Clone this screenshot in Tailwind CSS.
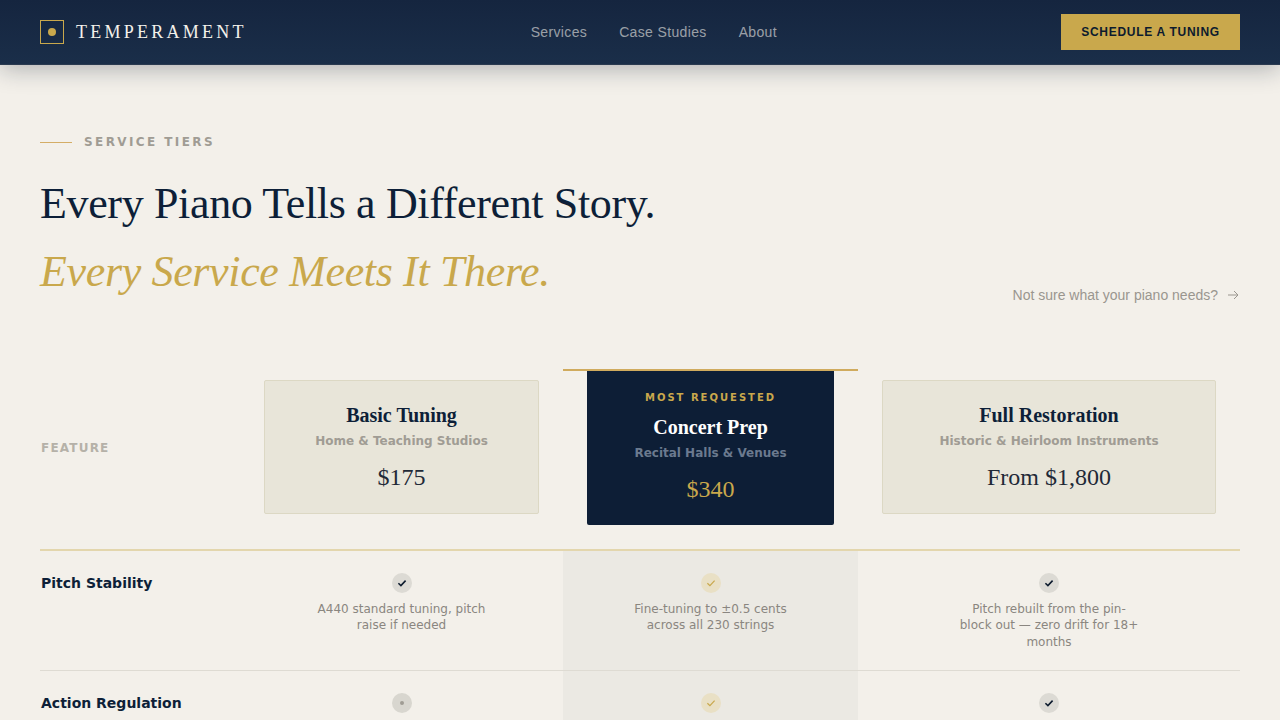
<!DOCTYPE html>
<html lang="en">
<head>
    <meta charset="UTF-8">
    <meta name="viewport" content="width=device-width, initial-scale=1.0">
    <title>Temperament</title>
    <script src="https://cdn.jsdelivr.net/npm/@tailwindcss/browser@4"></script>
</head>
<body class="bg-[#f3f0ea] h-[720px] overflow-hidden font-['DejaVu_Sans',sans-serif]">

    <!-- Nav -->
    <nav class="relative z-10 h-[65px] px-10 bg-linear-to-b from-[#15253f] to-[#1a2e49] border-b border-[#2a3a50] shadow-[0_4px_24px_rgba(13,27,46,0.3)] flex justify-between items-center">
        <div class="flex items-center gap-3">
            <div class="w-6 h-6 border border-[#c9a84c] flex items-center justify-center">
                <div class="w-2 h-2 rounded-full bg-[#c9a84c]"></div>
            </div>
            <span class="font-['Liberation_Serif',serif] text-lg leading-none tracking-[0.18em] text-[#f4f1eb]">TEMPERAMENT</span>
        </div>
        <div class="flex gap-8 font-['Liberation_Sans',sans-serif] text-sm tracking-[0.025em] text-[#f4f1eb]/60">
            <a>Services</a>
            <a>Case Studies</a>
            <a>About</a>
        </div>
        <button class="w-[179px] h-9 bg-[#c9a84c] font-['Liberation_Sans',sans-serif] text-xs font-bold tracking-[0.06em] text-[#0d1b2e]">SCHEDULE A TUNING</button>
    </nav>

    <main class="px-10">
        <!-- Heading -->
        <div class="pt-[69px] flex items-center gap-3">
            <div class="w-8 h-px bg-[#d4ad66]"></div>
            <span class="text-xs leading-4 font-bold tracking-[0.2em] text-[#a09c94]">SERVICE TIERS</span>
        </div>
        <div class="flex justify-between items-end">
            <h1 class="mt-5 font-['Liberation_Serif',serif] text-[44px] leading-[68px] font-normal tracking-[-0.35px] text-[#0d1f38]">
                Every Piano Tells a Different Story.<br>
                <em class="text-[#c9a84c]">Every Service Meets It There.</em>
            </h1>
            <a class="mb-px mr-px flex items-center gap-[9px] font-['Liberation_Sans',sans-serif] text-sm text-[#9a968f]">
                Not sure what your piano needs?
                <svg class="w-3 h-3" viewBox="0 0 12 12" fill="none" stroke="currentColor" stroke-width="1"><path d="M1 6h10M7 2l4 4-4 4"/></svg>
            </a>
        </div>

        <!-- Tiers table -->
        <div class="mt-[63px] grid grid-cols-[200px_323px_295px_382px]">
            <!-- Header row -->
            <div class="h-[182px] flex items-center border-b-2 border-[#e3d6ad] pb-[22px]">
                <span class="pl-px text-xs font-bold tracking-[0.1em] text-[#b5b1a8]">FEATURE</span>
            </div>
            <div class="h-[182px] pt-[11px] px-6 border-b-2 border-[#e3d6ad]">
                <div class="h-[134px] bg-[#e8e5d9] border border-[#dcd8c4] rounded-[2px] flex flex-col items-center">
                    <div class="mt-[21px] font-['Liberation_Serif',serif] text-xl leading-[26px] font-bold text-[#0d1f38]">Basic Tuning</div>
                    <div class="mt-[5px] text-xs leading-4 font-bold text-[#a09c94]">Home &amp; Teaching Studios</div>
                    <div class="mt-3 font-['Liberation_Serif',serif] text-2xl leading-8 text-[#1f2937]">$175</div>
                </div>
            </div>
            <div class="h-[182px] px-6 border-t-2 border-[#d0ab5e] border-b-2 border-b-[#e3d6ad]">
                <div class="h-[154px] bg-[#0d1e36] rounded-b-[2px] flex flex-col items-center">
                    <div class="mt-5 text-[10px] leading-[14px] font-bold tracking-[0.2em] text-[#c9a84c]">MOST REQUESTED</div>
                    <div class="mt-[9px] font-['Liberation_Serif',serif] text-xl leading-[26px] font-bold text-white">Concert Prep</div>
                    <div class="mt-[5px] text-xs leading-4 font-bold text-[#6b7a8f]">Recital Halls &amp; Venues</div>
                    <div class="mt-3 font-['Liberation_Serif',serif] text-2xl leading-8 text-[#c9a84c]">$340</div>
                </div>
            </div>
            <div class="h-[182px] pt-[11px] px-6 border-b-2 border-[#e3d6ad]">
                <div class="h-[134px] bg-[#e8e5d9] border border-[#dcd8c4] rounded-[2px] flex flex-col items-center">
                    <div class="mt-[21px] font-['Liberation_Serif',serif] text-xl leading-[26px] font-bold text-[#0d1f38]">Full Restoration</div>
                    <div class="mt-[5px] text-xs leading-4 font-bold text-[#a09c94]">Historic &amp; Heirloom Instruments</div>
                    <div class="mt-3 font-['Liberation_Serif',serif] text-2xl leading-8 text-[#1f2937]">From $1,800</div>
                </div>
            </div>

            <!-- Pitch Stability -->
            <div class="h-[120px] pt-6 border-b border-[#dedbd3]">
                <span class="pl-px block text-sm leading-4 font-bold text-[#0d1f38]">Pitch Stability</span>
            </div>
            <div class="h-[120px] pt-[22px] flex flex-col items-center border-b border-[#dedbd3]">
                <div class="w-5 h-5 rounded-full bg-[#dcdad4] flex items-center justify-center">
                    <svg class="w-3 h-3 text-[#0d1b2e]" viewBox="0 0 10 10" fill="none" stroke="currentColor" stroke-width="1.3"><path d="M2 5.2l2.1 2L8 3"/></svg>
                </div>
                <p class="mt-[7.5px] w-[180px] text-center text-xs leading-[16.5px] text-[#8a8680]">A440 standard tuning, pitch raise if needed</p>
            </div>
            <div class="h-[120px] pt-[22px] flex flex-col items-center bg-[#0d1b2e]/[0.03] border-b border-[#dedbd3]">
                <div class="w-5 h-5 rounded-full bg-[#e9e0c5] flex items-center justify-center">
                    <svg class="w-3 h-3 text-[#c9a84c]" viewBox="0 0 10 10" fill="none" stroke="currentColor" stroke-width="1"><path d="M2 5.2l2.1 2L8 3"/></svg>
                </div>
                <p class="mt-[7.5px] w-[180px] text-center text-xs leading-[16.5px] text-[#8a8680]">Fine-tuning to ±0.5 cents across all 230 strings</p>
            </div>
            <div class="h-[120px] pt-[22px] flex flex-col items-center border-b border-[#dedbd3]">
                <div class="w-5 h-5 rounded-full bg-[#dcdad4] flex items-center justify-center">
                    <svg class="w-3 h-3 text-[#0d1b2e]" viewBox="0 0 10 10" fill="none" stroke="currentColor" stroke-width="1.3"><path d="M2 5.2l2.1 2L8 3"/></svg>
                </div>
                <p class="mt-[7.5px] w-[180px] text-center text-xs leading-[16.5px] text-[#8a8680]">Pitch rebuilt from the pin-block out — zero drift for 18+ months</p>
            </div>

            <!-- Action Regulation -->
            <div class="h-[120px] pt-6">
                <span class="pl-px block text-sm leading-4 font-bold text-[#0d1f38]">Action Regulation</span>
            </div>
            <div class="h-[120px] pt-[22px] flex flex-col items-center">
                <div class="w-5 h-5 rounded-full bg-[#d8d6cf] flex items-center justify-center">
                    <div class="w-1 h-1 rounded-full bg-[#a09c94]"></div>
                </div>
            </div>
            <div class="h-[120px] pt-[22px] flex flex-col items-center bg-[#0d1b2e]/[0.03]">
                <div class="w-5 h-5 rounded-full bg-[#e9e0c5] flex items-center justify-center">
                    <svg class="w-3 h-3 text-[#c9a84c]" viewBox="0 0 10 10" fill="none" stroke="currentColor" stroke-width="1"><path d="M2 5.2l2.1 2L8 3"/></svg>
                </div>
            </div>
            <div class="h-[120px] pt-[22px] flex flex-col items-center">
                <div class="w-5 h-5 rounded-full bg-[#dcdad4] flex items-center justify-center">
                    <svg class="w-3 h-3 text-[#0d1b2e]" viewBox="0 0 10 10" fill="none" stroke="currentColor" stroke-width="1.3"><path d="M2 5.2l2.1 2L8 3"/></svg>
                </div>
            </div>
        </div>
    </main>

</body>
</html>
